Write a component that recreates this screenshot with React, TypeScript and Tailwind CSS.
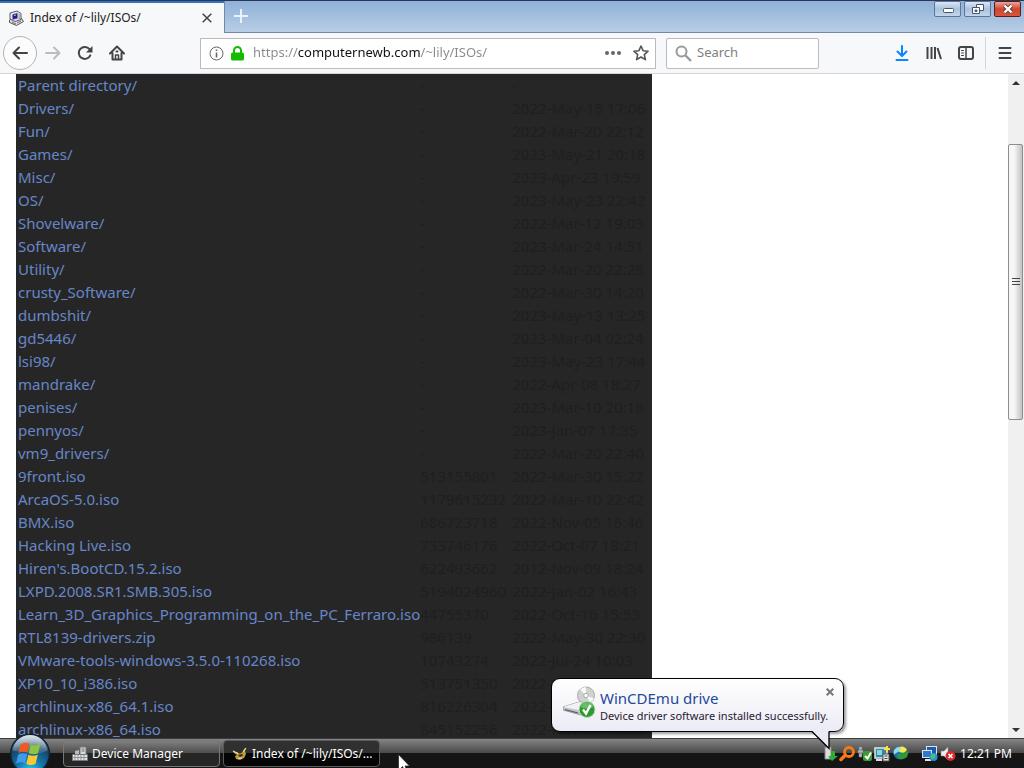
import React from 'react';

type Entry = { name: string; size: string; date: string };

const entries: Entry[] = [
  { name: 'Parent directory/', size: '-', date: '-' },
  { name: 'Drivers/', size: '-', date: '2022-May-15 17:06' },
  { name: 'Fun/', size: '-', date: '2022-Mar-20 22:12' },
  { name: 'Games/', size: '-', date: '2023-May-21 20:18' },
  { name: 'Misc/', size: '-', date: '2023-Apr-23 19:59' },
  { name: 'OS/', size: '-', date: '2023-May-23 22:42' },
  { name: 'Shovelware/', size: '-', date: '2022-Mar-12 19:03' },
  { name: 'Software/', size: '-', date: '2023-Mar-24 14:51' },
  { name: 'Utility/', size: '-', date: '2022-Mar-20 22:28' },
  { name: 'crusty_Software/', size: '-', date: '2022-Mar-30 14:20' },
  { name: 'dumbshit/', size: '-', date: '2023-May-13 13:25' },
  { name: 'gd5446/', size: '-', date: '2023-Mar-04 02:24' },
  { name: 'lsi98/', size: '-', date: '2023-May-23 17:44' },
  { name: 'mandrake/', size: '-', date: '2022-Apr-08 18:27' },
  { name: 'penises/', size: '-', date: '2023-Mar-10 20:18' },
  { name: 'pennyos/', size: '-', date: '2023-Jan-07 17:35' },
  { name: 'vm9_drivers/', size: '-', date: '2022-Mar-20 22:40' },
  { name: '9front.iso', size: '513155801', date: '2022-Mar-30 15:22' },
  { name: 'ArcaOS-5.0.iso', size: '1179615232', date: '2022-Mar-10 22:42' },
  { name: 'BMX.iso', size: '686723718', date: '2022-Nov-05 16:46' },
  { name: 'Hacking Live.iso', size: '733746176', date: '2022-Oct-07 18:21' },
  { name: "Hiren's.BootCD.15.2.iso", size: '622493662', date: '2012-Nov-09 18:24' },
  { name: 'LXPD.2008.SR1.SMB.305.iso', size: '5194024960', date: '2022-Jan-02 16:43' },
  { name: 'Learn_3D_Graphics_Programming_on_the_PC_Ferraro.iso', size: '44755370', date: '2022-Oct-16 15:53' },
  { name: 'RTL8139-drivers.zip', size: '986139', date: '2022-May-30 22:30' },
  { name: 'VMware-tools-windows-3.5.0-110268.iso', size: '10743274', date: '2022-Jul-24 10:03' },
  { name: 'XP10_10_i386.iso', size: '513751350', date: '2022-Jan-05 16:25' },
  { name: 'archlinux-x86_64.1.iso', size: '816226304', date: '2022-Nov-02 14:33' },
  { name: 'archlinux-x86_64.iso', size: '845152256', date: '2022-Nov-05 19:20' },
];

const SiteIcon = () => (
  <svg width="16" height="16" viewBox="0 0 16 16">
    <path d="M1.500 10l4-2 8 .5 2 3-7 4-7-3z" fill="#dcdce6" stroke="#333" strokeWidth=".8" />
    <path d="M2 3l7-2 4 2.500v6l-6 2-5-2.500z" fill="#ececf4" stroke="#333" strokeWidth=".8" />
    <path d="M4.500 4.500l5-1.500v5.500l-5 1z" fill="#1c1c96" stroke="#8a8aa0" strokeWidth=".6" />
    <path d="M10.500 3.500l2 1v4.500l-2 .5z" fill="#a8a8ba" />
    <path d="M4 12l4 2M9 13l4-2" stroke="#555" strokeWidth=".8" />
    <path d="M6 5.500l2-.5" stroke="#a9c3ff" />
  </svg>
);

const TitleBar = () => (
  <header className="flex h-[33px] shrink-0 border-t border-[#2c3654] bg-linear-to-b from-[#8fb1d8] to-[#b9cee6]">
    <div className="flex w-56 items-center border-t-2 border-[#2f74bf] bg-[#f7f8fa] pl-2 pr-[7px]">
      <SiteIcon />
      <span className="ml-1.5 flex-1 whitespace-nowrap text-[12px] text-[#222]">Index of /~lily/ISOs/</span>
      <button aria-label="Close tab" className="flex h-5 w-5 items-center justify-center">
        <svg width="10" height="10" viewBox="0 0 10 10">
          <path d="M.7.7l8.6 8.6M9.3.7L.7 9.3" stroke="#444" strokeWidth="1.5" />
        </svg>
      </button>
    </div>
    <div className="flex flex-1 items-start justify-between border-b border-l border-[#7288a6]">
      <button aria-label="New tab" className="flex h-[29px] w-8 items-center justify-center">
        <svg width="14" height="14" viewBox="0 0 14 14">
          <path d="M7 0v14M0 7h14" stroke="#e9f2fc" strokeWidth="2" />
        </svg>
      </button>
      <div className="mr-[3px] flex gap-[3px]">
        <button aria-label="Minimize" className="flex h-4 w-[27px] items-center justify-center rounded-xs border border-[#5d7595] bg-linear-to-b from-[#dbe7f4] via-[#a9c1de] to-[#c3d6eb]">
          <svg width="12" height="12" viewBox="0 0 12 12">
            <rect x="1.5" y="5.5" width="10" height="4" rx="1" fill="#fff" stroke="#44546c" />
          </svg>
        </button>
        <button aria-label="Restore" className="flex h-4 w-[27px] items-center justify-center rounded-xs border border-[#5d7595] bg-linear-to-b from-[#dbe7f4] via-[#a9c1de] to-[#c3d6eb]">
          <svg width="12" height="12" viewBox="0 0 12 12">
            <path d="M4.500 1.500h7v6h-7z" fill="#fff" stroke="#44546c" />
            <path d="M.5 4.500h7v6h-7z" fill="#fff" stroke="#44546c" />
            <path d="M3 7h2v1.500h-2z" fill="#9db4d0" stroke="#44546c" />
          </svg>
        </button>
        <button aria-label="Close" className="flex h-4 w-[27px] items-center justify-center rounded-xs border border-[#5c1c1c] bg-linear-to-b from-[#eba595] via-[#cf4430] to-[#d9573a]">
          <svg width="12" height="10" viewBox="0 0 12 10">
            <path d="M2.500 1.500l7 7M9.500 1.500l-7 7" stroke="#5a3a40" strokeWidth="4" />
            <path d="M2.500 1.500l7 7M9.500 1.500l-7 7" stroke="#fff" strokeWidth="2.400" />
          </svg>
        </button>
      </div>
    </div>
  </header>
);

const ToolButton = ({ label, children }: { label: string; children: React.ReactNode }) => (
  <button aria-label={label} className="flex h-8 w-8 shrink-0 items-center justify-center">
    <svg width="16" height="16" viewBox="0 0 16 16" fill="none" stroke="#444" strokeWidth="2" strokeLinecap="round" strokeLinejoin="round">
      {children}
    </svg>
  </button>
);

const Toolbar = () => (
  <nav className="flex h-[41px] shrink-0 items-center border-b border-[#d5d5d8] bg-[#f7f8fa] pl-[3px] pr-[3px]">
    <button aria-label="Back" className="flex h-[34px] w-[34px] shrink-0 items-center justify-center rounded-full border border-[#b5b5b8] bg-[#fcfcfd]">
      <svg width="16" height="16" viewBox="0 0 16 16" fill="none" stroke="#444" strokeWidth="2" strokeLinecap="round" strokeLinejoin="round">
        <path d="M15 8H1.500M7 2.500L1.500 8 7 13.500" />
      </svg>
    </button>
    <ToolButton label="Forward">
      <path d="M1 8h13.500M9 2.500L14.500 8 9 13.500" stroke="#bcbcbe" />
    </ToolButton>
    <ToolButton label="Reload">
      <path d="M13.300 10.300A6 6 0 1 1 12.500 4.200" />
      <path d="M15.500 1v6.500H9z" fill="#444" stroke="none" />
    </ToolButton>
    <ToolButton label="Home">
      <path d="M1 8.500L8 1.500l7 7M3.500 8v6.500h9V8" />
      <path d="M6.500 14v-4h3v4" strokeWidth="1.500" />
      <path d="M7.500 6.500h1" />
    </ToolButton>

    <div className="ml-[67px] flex h-[31px] min-w-0 flex-1 items-center border border-[#bbbbbf] bg-white pl-2 pr-0.5">
      <svg width="15" height="15" viewBox="0 0 15 15" className="shrink-0" fill="none" stroke="#666">
        <circle cx="7.500" cy="7.500" r="6.500" />
        <path d="M7.500 6.500v5M7.500 3.500v1.500" strokeWidth="1.600" />
      </svg>
      <svg width="13" height="15" viewBox="0 0 13 15" className="ml-[7px] shrink-0">
        <rect x="0" y="6.500" width="13" height="8" rx="1.500" fill="#12bc00" />
        <path d="M3 7V4.500a3.500 3.500 0 0 1 7 0V7" fill="none" stroke="#12bc00" strokeWidth="2" />
      </svg>
      <input
        type="text"
        aria-label="Address"
        defaultValue="https://computernewb.com/~lily/ISOs/"
        className="ml-[9px] min-w-0 flex-1 bg-[linear-gradient(to_right,#8a8a8a_45px,#111_45px,#111_167px,#8a8a8a_167px)] bg-clip-text text-[13px] text-transparent outline-none"
      />
      <button aria-label="Page actions" className="flex h-6 w-7 items-center justify-center">
        <svg width="16" height="4" viewBox="0 0 16 4" fill="#666">
          <circle cx="2" cy="2" r="2" />
          <circle cx="8" cy="2" r="2" />
          <circle cx="14" cy="2" r="2" />
        </svg>
      </button>
      <button aria-label="Bookmark this page" className="ml-0.5 flex h-6 w-6 items-center justify-center">
        <svg width="16" height="16" viewBox="0 0 16 16" fill="none" stroke="#555" strokeWidth="1.600" strokeLinejoin="round">
          <path d="M8 1l2.100 4.700 5 .5-3.800 3.400 1.100 5L8 12l-4.400 2.600 1.100-5L.9 6.200l5-.5z" />
        </svg>
      </button>
    </div>

    <div className="ml-2.5 flex h-[31px] w-[153px] shrink-0 items-center rounded-xs border border-[#bbbbbf] bg-white px-2">
      <svg width="17" height="17" viewBox="0 0 17 17" className="shrink-0" fill="none" stroke="#999" strokeWidth="2">
        <circle cx="6.500" cy="6.500" r="5" />
        <path d="M10.500 10.500l5.500 5.500" strokeWidth="2.400" />
      </svg>
      <input type="text" aria-label="Search" placeholder="Search" className="ml-[5px] w-full min-w-0 text-[13px] outline-none placeholder:text-[#808080]" />
    </div>

    <div className="ml-[67px] flex items-center">
      <ToolButton label="Downloads">
        <path d="M8 1v9.500M3.500 6.500L8 11l4.500-4.500M2.500 15h11" stroke="#0a84ff" />
      </ToolButton>
      <ToolButton label="Library">
        <path d="M1.500 2v12M5.500 2v12M9 2v12M11.500 3l3.500 11" strokeLinecap="butt" />
      </ToolButton>
      <ToolButton label="Sidebars">
        <rect x="1" y="2" width="14" height="12" rx="2" />
        <path d="M8 2v12" strokeWidth="1.500" />
        <path d="M3.500 5.500h2M3.500 8h2M3.500 10.500h2" strokeWidth="1" />
      </ToolButton>
      <div className="mx-[3px] h-8 w-px bg-[#d5d5d8]" />
      <ToolButton label="Open menu">
        <path d="M2.500 3h11M2.500 8h11M2.500 13h11" />
      </ToolButton>
    </div>
  </nav>
);

const ScrollBar = () => (
  <div className="flex w-4 shrink-0 flex-col items-center bg-[#f0f0f0]">
    <button aria-label="Scroll up" className="flex h-[17px] w-4 items-center justify-center">
      <svg width="8" height="4" viewBox="0 0 8 4"><path d="M0 4l4-4 4 4z" fill="#333" /></svg>
    </button>
    <div className="flex min-h-0 w-full flex-1 flex-col">
      <div className="grow-[53] basis-0" />
      <div className="flex w-[15px] grow-[275] basis-0 flex-col items-center justify-center gap-0.5 rounded-xs border border-[#8e8e8e] bg-linear-to-r from-[#f6f6f6] from-40% to-[#c2c2c4]">
        <div className="h-px w-2 bg-[#444]" />
        <div className="h-px w-2 bg-[#444]" />
        <div className="h-px w-2 bg-[#444]" />
      </div>
      <div className="grow-[302] basis-0" />
    </div>
    <button aria-label="Scroll down" className="flex h-[17px] w-4 items-center justify-center">
      <svg width="8" height="4" viewBox="0 0 8 4"><path d="M0 0l4 4 4-4z" fill="#333" /></svg>
    </button>
  </div>
);

const Listing = () => (
  <main className="flex min-h-0 flex-1 bg-white">
    <div className="min-w-0 flex-1 overflow-hidden pl-4">
      <table className="border-collapse whitespace-nowrap bg-[#262626] text-left text-[15px] leading-[23px] text-[#1f1f1f]">
        <tbody>
          {entries.map((entry) => (
            <tr key={entry.name}>
              <td className="w-[404px] p-0 pl-0.5">
                <a href="#" className="text-[#6686c9]">{entry.name}</a>
              </td>
              <td className="w-[92px] p-0">{entry.size}</td>
              <td className="w-[140px] p-0">{entry.date}</td>
            </tr>
          ))}
        </tbody>
      </table>
    </div>
    <ScrollBar />
  </main>
);

const StartOrb = () => (
  <svg width="42" height="42" viewBox="0 0 42 42">
    <defs>
      <radialGradient id="orb" cx="50%" cy="95%" r="95%">
        <stop offset="0" stopColor="#2fd0f2" />
        <stop offset=".35" stopColor="#1478ae" />
        <stop offset=".7" stopColor="#174468" />
        <stop offset="1" stopColor="#7f9cad" />
      </radialGradient>
      <linearGradient id="gloss" x1="0" y1="0" x2="0" y2="1">
        <stop offset="0" stopColor="#fff" stopOpacity=".75" />
        <stop offset="1" stopColor="#fff" stopOpacity=".1" />
      </linearGradient>
    </defs>
    <circle cx="21" cy="21" r="19.500" fill="url(#orb)" stroke="#10222f" strokeWidth="1.500" />
    <path d="M4 18a17 16 0 0 1 34 0q-9 4-17 2T4 18z" fill="url(#gloss)" />
    <path d="M11.500 11.500q4.500-3 9-.8l-2 9q-4.500-2-9 .3z" fill="#ee5a24" />
    <path d="M21.800 11.500q4.500 2.300 9.500-.8l-2.200 9.500q-4.500 2.300-9.400 0z" fill="#8cc63e" />
    <path d="M9.200 21.500q4.500-2.500 9-.3l-2.100 9q-4.500-2-9 .5z" fill="#3f9be8" />
    <path d="M19.400 21.700q4.500 2.300 9.400 0l-2.200 9q-4.500 2.600-9.300.3z" fill="#fdc82f" />
  </svg>
);

const TaskButton = ({ label, active, children }: { label: string; active?: boolean; children: React.ReactNode }) => (
  <button
    className={`flex h-[27px] w-[157px] min-w-0 items-center gap-1 rounded-sm border pl-2 pr-1 text-[12px] text-white ${
      active
        ? 'border-[#5a5a5a] bg-linear-to-b from-[#303030] from-50% to-[#050505] to-50%'
        : 'border-[#777] bg-linear-to-b from-[#808080] via-[#4c4c4c] via-50% to-[#262626] to-50%'
    }`}
  >
    {children}
    <span className="truncate">{label}</span>
  </button>
);

const TrayIcons = () => (
  <div className="flex items-center">
    <svg width="16" height="16" viewBox="0 0 16 16">
      <path d="M2 1h6v12H2z" fill="#ddd" stroke="#888" />
      <path d="M9 15l-4-5h3V5h4v5h3z" fill="#2fae35" />
    </svg>
    <svg width="16" height="16" viewBox="0 0 16 16" fill="none" stroke="#f47b16">
      <circle cx="10" cy="6" r="4.500" strokeWidth="2.800" />
      <path d="M6 9.500L2 13.500" strokeWidth="3.500" strokeLinecap="round" />
    </svg>
    <svg width="17" height="16" viewBox="0 0 17 16" className="ml-0.5">
      <path d="M2 1h3v3H2zM1 4h5v3H1zM2 7h3v4H2z" fill="#bbb" stroke="#777" strokeWidth=".6" />
      <rect x="6" y="5" width="9" height="10" rx="2" fill="#3c9b35" />
      <path d="M8 10l2.500 2.500 3.500-6" fill="none" stroke="#fff" strokeWidth="2" />
    </svg>
    <svg width="16" height="16" viewBox="0 0 16 16">
      <rect x="1" y="2" width="12" height="10" fill="#2f8ea1" stroke="#e2e8e8" strokeWidth="1.500" />
      <path d="M3 4h5v5H3z" fill="#8fd2db" />
      <path d="M9 8h6v7H9z" fill="#e6e6e6" stroke="#555" />
      <path d="M10.500 10h3M10.500 12.500h3" stroke="#444" />
      <path d="M13 0v6M10 3h6" stroke="#f8df55" strokeWidth="2" />
      <path d="M2 14h6" stroke="#ddd" strokeWidth="2" />
    </svg>
    <svg width="18" height="16" viewBox="0 0 18 16" className="ml-0.5">
      <circle cx="8" cy="7" r="6.500" fill="#1f6cc0" />
      <path d="M2 4q3-4 7-3 1 3-3 5T2 9q-1-3 0-5z" fill="#8bdcf2" />
      <path d="M9 .500q4-.5 6 3.500l-3 3-5-1z" fill="#f5e94a" />
      <path d="M5 8q5 0 8-2l4-1-2 6q-5 4-9 1z" fill="#2c9a38" />
    </svg>
    <svg width="16" height="16" viewBox="0 0 16 16" className="ml-3">
      <rect x="4.500" y=".5" width="10" height="8" fill="#1d5bb0" stroke="#d9e6f0" />
      <rect x=".5" y="4.500" width="9" height="7" fill="#2e78cf" stroke="#d9e6f0" />
      <path d="M3 14h6" stroke="#d9e6f0" strokeWidth="2" />
      <circle cx="11.500" cy="11" r="4" fill="#2596dd" />
      <path d="M9 9q3-2 4 0t-2 4q-3-1-2-4z" fill="#56c25b" />
    </svg>
    <svg width="16" height="16" viewBox="0 0 16 16" className="ml-0.5">
      <path d="M1 5h3l4-4v13l-4-4H1z" fill="#eee" stroke="#888" strokeWidth=".6" />
      <circle cx="10.500" cy="10" r="5" fill="#d92b2b" />
      <path d="M8.500 8l4 4M12.500 8l-4 4" stroke="#fff" strokeWidth="1.600" />
    </svg>
  </div>
);

const Balloon = () => (
  <aside className="absolute bottom-9 right-[180px] flex h-[54px] w-[293px] rounded-[9px] border border-black bg-linear-to-b from-white to-[#ebebf5] pl-[11px] shadow-[2px_2px_3px_rgba(0,0,0,0.4)]">
    <svg width="34" height="34" viewBox="0 0 34 34" className="mt-[7px] shrink-0">
      <circle cx="23" cy="9.500" r="8.500" fill="#cfd3cf" stroke="#a8aba8" />
      <path d="M23 9.500L17 3.500a8.500 8.500 0 0 1 6-2.500zM23 9.500l8 3a8 8 0 0 1-4 4z" fill="#f8f8f8" />
      <circle cx="23" cy="9.500" r="2.200" fill="#fff" stroke="#999" strokeWidth=".8" />
      <path d="M0 21l16-5 12 1v8l-10 4-18-5z" fill="#c3c5ca" stroke="#85878c" strokeWidth=".8" />
      <path d="M0 21l16 3 12-6-12-2z" fill="#f2f2f4" />
      <path d="M2 23.500l13 3.500" stroke="#55585e" strokeWidth="1.200" />
      <circle cx="24" cy="23.500" r="8" fill="#2c9a2e" stroke="#c3dcc3" />
      <path d="M17.500 21a7 7 0 0 1 13 0q-6 3-13 0z" fill="#69bd64" />
      <path d="M20 23.500l3 4 4.500-8.500" fill="none" stroke="#fff" strokeWidth="2.400" />
    </svg>
    <div className="ml-[3px] mt-2 whitespace-nowrap">
      <h2 className="text-[15px] leading-[22px] text-[#1d4a9c]">WinCDEmu drive</h2>
      <p className="text-[11px] leading-[14px] text-[#2b2030]">Device driver software installed successfully.</p>
    </div>
    <button aria-label="Dismiss" className="absolute right-2 top-2 flex h-2.5 w-2.5 items-center justify-center">
      <svg width="8" height="8" viewBox="0 0 8 8"><path d="M.7.7l6.600 6.600M7.300.7L.7 7.300" stroke="#777" strokeWidth="2" /></svg>
    </button>
    <svg width="20" height="19" viewBox="0 0 20 19" className="absolute -bottom-[19px] right-3">
      <path d="M1 0h17v17z" fill="#ebebf5" />
      <path d="M1 .5L18 17.500V.5" fill="none" stroke="#000" strokeWidth="1.300" />
    </svg>
  </aside>
);

const Taskbar = () => (
  <footer className="relative flex h-[30px] shrink-0 items-center justify-between border-t border-[#3c3c3c] bg-linear-to-b from-[#858585] via-[#484848] via-50% to-[#151515] to-50% pr-3">
    <button aria-label="Start" className="absolute bottom-[-7px] left-[9px]">
      <StartOrb />
    </button>
    <div className="ml-[63px] flex min-w-0 gap-[3px]">
      <TaskButton label="Device Manager">
        <svg width="16" height="16" viewBox="0 0 16 16" className="shrink-0">
          <path d="M8 1h6v8H8z" fill="#d7dbe0" stroke="#777" />
          <path d="M9.500 3h3M9.500 5h3" stroke="#666" />
          <path d="M3 5l4-1v4H3z" fill="#b6bcc4" />
          <path d="M.5 8.500h15v6H.5z" fill="#e2e5e8" stroke="#777" />
          <path d="M3 9v5M6 9v5M9 9v5M12 9v5M1 11.500h14" stroke="#8b9096" />
        </svg>
      </TaskButton>
      <TaskButton label="Index of /~lily/ISOs/..." active>
        <svg width="16" height="16" viewBox="0 0 16 16" className="shrink-0">
          <path d="M1 5l4 1.500 3 1 3-1.500 1-3 2-1-1 3 1 3-2 4-4 2-4-1-1-3 2-1-3-2z" fill="#b99a45" />
          <path d="M6 9l4-1 1 1.500-3 1.500z" fill="#3b2b10" />
          <path d="M1 5l5 2.500M11 6l3-4M6 12.500l4-.5" stroke="#f3e09a" strokeWidth="1.200" />
        </svg>
      </TaskButton>
    </div>
    <div className="flex items-center gap-1">
      <TrayIcons />
      <time className="whitespace-nowrap text-[12px] text-white">12:21 PM</time>
    </div>
    <Balloon />
    <svg width="12" height="14" viewBox="0 0 12 14" className="absolute bottom-0 left-[398px]">
      <path d="M.5.5v16l4-4 2.500 5 2-1-2-4.500h4.500z" fill="#fff" stroke="#222" strokeWidth=".7" />
    </svg>
  </footer>
);

export default function App() {
  return (
    <div className="flex h-screen flex-col overflow-hidden font-['Noto_Sans','Open_Sans',sans-serif]">
      <TitleBar />
      <Toolbar />
      <Listing />
      <Taskbar />
    </div>
  );
}
